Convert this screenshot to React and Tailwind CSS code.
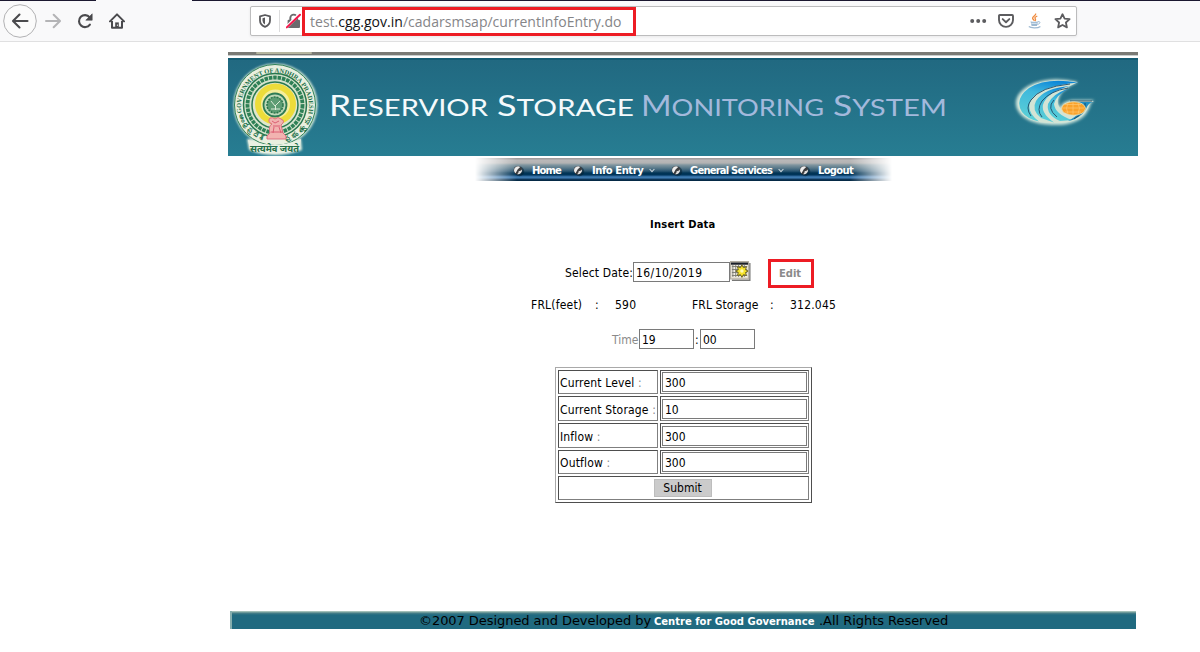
import React from 'react';

const TAHOMA = "font-['DejaVu_Sans_Condensed','DejaVu_Sans',sans-serif] [font-stretch:condensed]";

function BackIcon() {
  return (
    <svg width="34" height="34" viewBox="0 0 34 34" className="shrink-0">
      <circle cx="17" cy="17" r="16.3" fill="#fbfbfb" stroke="#b1b1b3" />
      <path d="M24.5 17H10.5M16.5 10.5L10 17L16.5 23.5" fill="none" stroke="#4a4a4d" strokeWidth="2.1" strokeLinecap="round" strokeLinejoin="round" />
    </svg>
  );
}

function ForwardIcon() {
  return (
    <svg width="16" height="16" viewBox="0 0 16 16" className="shrink-0">
      <path d="M1 8H14.5M8.7 1.8L15 8L8.7 14.2" fill="none" stroke="#b4b4b6" strokeWidth="2" strokeLinecap="round" strokeLinejoin="round" />
    </svg>
  );
}

function ReloadIcon() {
  return (
    <svg width="16" height="16" viewBox="0 0 16 16" className="shrink-0">
      <path d="M12.9 11.6A6 6 0 1 1 12.6 4.2" fill="none" stroke="#4a4a4d" strokeWidth="2.1" strokeLinecap="round" />
      <path d="M15.2 0.8V7.2H8.8Z" fill="#4a4a4d" stroke="#4a4a4d" strokeWidth="0.6" strokeLinejoin="round" />
    </svg>
  );
}

function HomeIcon() {
  return (
    <svg width="16" height="16" viewBox="0 0 16 16" className="shrink-0">
      <path d="M1 8.4L8 1.4L15 8.4" fill="none" stroke="#4a4a4d" strokeWidth="2" strokeLinecap="round" strokeLinejoin="round" />
      <path d="M3 8V14.8H13V8" fill="none" stroke="#4a4a4d" strokeWidth="2" strokeLinejoin="round" />
      <path d="M6.2 15V9.4H9.8V15" fill="#4a4a4d" />
      <path d="M8.4 11.6V12.8" stroke="#fff" strokeWidth="1" />
    </svg>
  );
}

function ShieldIcon() {
  return (
    <svg width="12" height="14" viewBox="0 0 12 14" className="shrink-0">
      <path d="M1 2.3L6 1L11 2.3V6.5Q11 11 6 12.9Q1 11 1 6.5Z" fill="none" stroke="#5a5a5d" strokeWidth="1.8" strokeLinejoin="round" />
      <path d="M6 3.6V10.4Q3.5 9.2 3.5 6.4V4.2Z" fill="#5a5a5d" />
    </svg>
  );
}

function InsecureIcon() {
  return (
    <svg width="15" height="16" viewBox="0 0 15 16" className="shrink-0">
      <path d="M4.3 8V5a3.4 3.4 0 0 1 6.8 0V8" fill="none" stroke="#6a6a6d" strokeWidth="1.9" />
      <rect x="1.6" y="6.8" width="12.4" height="8.2" rx="1" fill="#6a6a6d" />
      <path d="M0.6 13.9L13.4 1.1" stroke="#fff" strokeWidth="3" />
      <path d="M0.8 14.4L14 1.8" stroke="#f5174b" strokeWidth="2" strokeLinecap="round" />
    </svg>
  );
}

function PocketIcon() {
  return (
    <svg width="16" height="14" viewBox="0 0 16 14" className="shrink-0">
      <path d="M1.9 1H14.1Q15 1 15 1.9V6A7 6.9 0 0 1 1 6V1.9Q1 1 1.9 1Z" fill="none" stroke="#5c5c5f" strokeWidth="1.9" />
      <path d="M4.7 5.1L8 8.2L11.3 5.1" fill="none" stroke="#5c5c5f" strokeWidth="1.9" strokeLinecap="round" strokeLinejoin="round" />
    </svg>
  );
}

function JavaIcon() {
  return (
    <svg width="14" height="16" viewBox="0 0 14 16" className="shrink-0">
      <path d="M7.6 0.5C8.6 2.5 4.2 3.4 4.6 5.4C4.8 6.4 6 6.8 6.1 7.8M9.3 3C6.4 4.2 6.7 5 7.4 6C7.9 6.8 7.5 7.4 7 8" fill="none" stroke="#f08a3c" strokeWidth="1.3" />
      <path d="M2.5 8.2C4 9 8.5 9 10 8.2L9 13H3.6Z" fill="#9db9d2" />
      <path d="M10 8.7C12.8 8 12.6 11 9.4 11.4" fill="none" stroke="#9db9d2" strokeWidth="1" />
      <path d="M3.3 10.4H8.8" stroke="#e8f0f6" strokeWidth="0.8" />
      <path d="M0.8 13.6C3 15.4 10 15.3 12.4 13.4" fill="none" stroke="#9db9d2" strokeWidth="1.3" />
    </svg>
  );
}

function StarIcon() {
  return (
    <svg width="17" height="16" viewBox="0 0 17 16" className="shrink-0">
      <path d="M8.5 1.2L10.6 5.6L15.6 6.2L11.9 9.5L12.9 14.4L8.5 12L4.1 14.4L5.1 9.5L1.4 6.2L6.4 5.6Z" fill="none" stroke="#5c5c5f" strokeWidth="1.8" strokeLinejoin="round" />
    </svg>
  );
}

function BrowserBar() {
  return (
    <header className="bg-[#f9f9fa] border-b border-[#e0e0e1] h-[42px]">
      <div className="flex h-px">
        <div className="w-24 bg-[#1b1830]" />
        <div className="w-24 bg-[#f9f9fa]" />
        <div className="grow bg-[#1b1830]" />
      </div>
      <div className="flex h-10 items-center pl-[3px]">
        <BackIcon />
        <div className="flex items-center pl-2">
          <ForwardIcon />
        </div>
        <div className="pl-4">
          <ReloadIcon />
        </div>
        <div className="pl-4">
          <HomeIcon />
        </div>
        <div className="ml-[125px] flex h-[30px] w-[827px] items-center rounded-xs border border-[#bcbcbd] bg-white shadow-[0_1px_3px_rgba(0,0,0,0.07)]">
          <div className="flex items-center pl-2">
            <ShieldIcon />
            <div className="ml-2 h-[22px] w-px bg-[#dcdcdd]" />
            <div className="ml-[6px] w-[15px]">
              <InsecureIcon />
            </div>
          </div>
          <div className="ml-px flex h-[29px] w-[334px] shrink-0 items-center border-[3px] border-[#ed1c24] pl-[5px] font-['Open_Sans',sans-serif] text-[14px] tracking-[0.02px] whitespace-nowrap text-[#858588]">
            <span>
              test.<span className="text-[#111114]">cgg.gov.in</span>/cadarsmsap/currentInfoEntry.do
            </span>
          </div>
          <div className="ml-auto flex items-center pr-[5px]">
            <svg width="17" height="4" viewBox="0 0 17 4">
              <circle cx="2.2" cy="2" r="2" fill="#5c5c5f" />
              <circle cx="8.2" cy="2" r="2" fill="#5c5c5f" />
              <circle cx="14.2" cy="2" r="2" fill="#5c5c5f" />
            </svg>
            <div className="ml-[11px]"><PocketIcon /></div>
            <div className="ml-[14px]"><JavaIcon /></div>
            <div className="ml-[12px]"><StarIcon /></div>
          </div>
        </div>
      </div>
    </header>
  );
}

function Emblem() {
  return (
    <svg width="90" height="98" viewBox="0 0 90 98" className="shrink-0">
      <defs>
        <filter id="halo" x="-10%" y="-10%" width="120%" height="120%">
          <feGaussianBlur stdDeviation="1.3" />
        </filter>
        <path id="ringText" d="M12.6 53A34 34 0 1 1 79.4 53" />
        <path id="ringLeft" d="M10 55A38 38 0 0 0 36 81" />
        <path id="ringRight" d="M57 81A38 38 0 0 0 83 55" />
      </defs>
      <ellipse cx="46.5" cy="45" rx="42" ry="41.5" fill="#d8ecd9" filter="url(#halo)" />
      <path d="M18 79L20 90Q46 100 73 90L72 79Z" fill="#e4efe0" filter="url(#halo)" />
      <circle cx="46" cy="45" r="40.5" fill="#e9efdf" stroke="#2f8058" strokeWidth="1" />
      <circle cx="46" cy="45" r="31.5" fill="#d5e3cd" stroke="#27774e" strokeWidth="1.5" />
      <circle cx="46" cy="45" r="27.5" fill="none" stroke="#2e8056" strokeWidth="3.8" strokeDasharray="3.5 0.9" />
      <circle cx="46" cy="45" r="23" fill="#dfe6cc" stroke="#2a7950" strokeWidth="1.5" />
      <circle cx="46.5" cy="44" r="20.5" fill="#eddc3a" />
      <circle cx="46.5" cy="44" r="14.5" fill="#f4ee9c" />
      <circle cx="46" cy="45" r="11.5" fill="#bcd7b7" stroke="#2e7b55" strokeWidth="1.8" />
      <circle cx="46" cy="45" r="8" fill="#5d9c74" stroke="#287449" strokeWidth="1.5" strokeDasharray="2 1" />
      <path d="M42 41L46 46L51 41M42 49H51M46.5 45V50" stroke="#dcebd8" strokeWidth="1" fill="none" />
      <g fill="#226f49" fontFamily="Liberation Serif, serif" fontWeight="bold" fontSize="6.5">
        <text><textPath href="#ringText" textLength="120">GOVERNMENT OF ANDHRA PRADESH</textPath></text>
        <text fontFamily="Noto Sans, sans-serif"><textPath href="#ringLeft" textLength="36">ఆంధ్రప్రదేశ్</textPath></text>
        <text fontFamily="Noto Sans, sans-serif"><textPath href="#ringRight" textLength="36">ప్రభుత్వము</textPath></text>
      </g>
      <path d="M41 73Q39 66 43 64Q38 62 41 58Q44 57 46 59Q49 56 52 59Q57 61 52 65L54 73L57 76V79H38V76Z" fill="#f2b3b0" stroke="#d9677a" strokeWidth="0.9" />
      <path d="M43 61L46 63L50 61M44 66H51M42 72H54M45 67L44 73M50 67L52 73" stroke="#d8566d" strokeWidth="0.9" fill="none" />
      <path d="M19 80Q46 90 72 79L71 89Q46 97 21 90Z" fill="#e9f0e3" />
      <text x="21" y="92" fill="#266f48" fontFamily="Noto Sans, sans-serif" fontWeight="bold" fontSize="10" textLength="49" lengthAdjust="spacingAndGlyphs">सत्यमेव जयते</text>
    </svg>
  );
}

function BannerTitle() {
  const words = [
    { first: 'R', rest: 'ESERVIOR', x: 0, w: 159, fill: '#f4fafc' },
    { first: 'S', rest: 'TORAGE', x: 168, w: 137, fill: '#f4fafc' },
    { first: 'M', rest: 'ONITORING', x: 312, w: 183, fill: '#a3b9dc' },
    { first: 'S', rest: 'YSTEM', x: 504, w: 114, fill: '#a3b9dc' },
  ];
  return (
    <svg width="630" height="36" viewBox="0 0 630 36" className="shrink-0">
      {words.map((w) => (
        <text key={w.x} x={w.x} y="28" fill={w.fill} fontFamily="Lato, sans-serif" textLength={w.w} lengthAdjust="spacingAndGlyphs">
          <tspan fontSize="28.5">{w.first}</tspan>
          <tspan fontSize="23.5">{w.rest}</tspan>
        </text>
      ))}
    </svg>
  );
}

function SwirlLogo() {
  return (
    <svg width="90" height="56" viewBox="0 0 90 56" className="shrink-0">
      <defs>
        <filter id="glow" x="-10%" y="-10%" width="120%" height="120%">
          <feGaussianBlur stdDeviation="1.4" />
        </filter>
        <linearGradient id="wave" x1="0.6" y1="0" x2="0.3" y2="1">
          <stop offset="0" stopColor="#0c86d8" />
          <stop offset="0.35" stopColor="#3fb9dc" />
          <stop offset="1" stopColor="#5cd0d6" />
        </linearGradient>
      </defs>
      <path d="M70 8Q40 1 20 12Q4 22 9 35Q16 50 44 51Q68 52 78 40Q82 34 83 29L86 26H64Q52 28 53 34Q47 28 54 18L62 12Z" fill="#cfe6dc" filter="url(#glow)" />
      <path d="M70 8Q38 3 21 13Q7 24 11 35Q18 49 44 49Q68 50 77 39Q81 33 82 29L86 27H65Q54 29 54 36Q46 29 53 18L62 12Z" fill="#d3e4d5" />
      <path d="M70 8.5Q38 3 21 14Q6 25 14 38Q19 45 31 47.5Q17 37 23 26Q32 12 70 8.5Z" fill="url(#wave)" />
      <path d="M62 12Q36 14 28 27Q23 36 33 44L46 48.5Q31 38 36 28Q42 17 62 12Z" fill="url(#wave)" />
      <path d="M60 15Q44 20 40 30Q38 41 52 47L64 46Q47 40 46 30Q48 21 60 15Z" fill="url(#wave)" />
      <path d="M23 42Q17 34 23 26Q32 13 62 10M34 43Q28 36 34 27Q42 17 60 14M49 43Q38 34 46 26" fill="none" stroke="#234a64" strokeWidth="0.9" />
      <path d="M62 28H85Q80 29 78 35Q72 45 60 47Q75 39 74 31Z" fill="#1e8ec4" />
      <path d="M77 29Q79 37 66 45M62 27H84" fill="none" stroke="#20455e" strokeWidth="0.9" />
      <ellipse cx="65.5" cy="34.5" rx="12" ry="6.8" fill="#f9a22b" stroke="#e5e4c0" strokeWidth="0.8" />
      <path d="M54 34H76M57 30.5H73M57 38H73M65 28V41M60 29Q57 34 60 40M70 29Q73 34 70 40" fill="none" stroke="#ffc771" strokeWidth="0.7" />
    </svg>
  );
}

function Banner() {
  return (
    <div className="mt-[10px] ml-[228px] w-[910px]">
      <div className="flex h-[3px] bg-[#7a7a75]">
        <div className="ml-7 h-[2px] w-[56px] rounded-full bg-[#b5b59f]" />
      </div>
      <div className="h-[3px] border-t border-[#c9cecd] bg-white" />
      <div className="flex h-[98px] border-t-2 border-[#145c73] bg-linear-to-b from-[#216981] to-[#277d92]">
        <div className="pl-[1px]"><Emblem /></div>
        <div className="pt-[28px] pl-[10px]"><BannerTitle /></div>
        <div className="pt-[14px] pl-[49px]"><SwirlLogo /></div>
      </div>
    </div>
  );
}

function Bullet() {
  return (
    <svg width="13" height="13" viewBox="0 0 13 13" className="shrink-0">
      <circle cx="6.4" cy="7.4" r="4.8" fill="#06202f" opacity="0.5" />
      <circle cx="4.9" cy="6.2" r="4.2" fill="#3c3c3e" />
      <path d="M1 6.2A4 4 0 0 1 7.2 2.9L4.6 5.4L2.6 9.2A4 4 0 0 1 1 6.2Z" fill="#ededed" />
      <path d="M8.9 5.4A4 4 0 0 1 4.2 10.2Q6 8.4 5.6 7.2Q7.8 7 8.9 5.4Z" fill="#dedede" />
    </svg>
  );
}

function Caret() {
  return (
    <svg width="6" height="5" viewBox="0 0 6 5" className="shrink-0">
      <path d="M0.6 1L3 3.6L5.4 1" fill="none" stroke="#c8d3da" strokeWidth="1.1" />
    </svg>
  );
}

function NavItem({ label, width, tracking, caret }) {
  return (
    <div className={`flex items-center ${width}`}>
      <Bullet />
      <span className={`ml-[6px] whitespace-nowrap ${tracking}`}>{label}</span>
      {caret && <div className="ml-[6px] pt-px"><Caret /></div>}
    </div>
  );
}

function Nav() {
  return (
    <nav className="mt-[2px] ml-[475px] grid h-[23px] w-[417px]">
      <div className="col-start-1 row-start-1 bg-[linear-gradient(to_bottom,#a19c9d_0,#a19c9d_1px,#bab8b9_2px,#b3b3b3_5px,#7f959f_7px,#59798a_10px,#2d5874_13px,#003355_15px,#00355a_17px,#2a6296_18px,#3d7ab0_19px,#3d7ab0_20px,#153f66_21px,#042945_22px)] [mask-image:linear-gradient(to_right,transparent_0,black_42px,black_375px,transparent_417px)]" />
      <div className="z-10 col-start-1 row-start-1 flex items-center pt-px pl-[38px] font-['DejaVu_Sans',sans-serif] text-[10px] font-bold text-white">
        <NavItem label="Home" width="w-[60px]" tracking="tracking-[-0.9px]" />
        <NavItem label="Info Entry" width="w-[98px]" tracking="tracking-[-0.45px]" caret />
        <NavItem label="General Services" width="w-[128px]" tracking="tracking-[-0.8px]" caret />
        <NavItem label="Logout" width="w-[60px]" tracking="tracking-[-0.7px]" />
      </div>
    </nav>
  );
}

function CalendarIcon() {
  return (
    <svg width="21" height="20" viewBox="0 0 22 20" preserveAspectRatio="none" className="shrink-0">
      <path d="M2 19.3H20.8V2" fill="none" stroke="#4b4b48" strokeWidth="1.4" opacity="0.75" />
      <rect x="0.5" y="0.5" width="19" height="17.5" fill="#d9d2c4" stroke="#b3aea3" />
      <rect x="1.5" y="3.5" width="17" height="13" fill="#f3efe5" />
      <rect x="1" y="1.5" width="18" height="2.2" fill="#1a1f29" />
      <path d="M2 5.5H18M2 8.5H18M2 11.5H18M2 14.5H18M3 4V16M6 4V16M9 4V16M12 4V16M15 4V16" stroke="#77776f" strokeWidth="0.9" />
      <path d="M12.5 3.8L14 6.6L17.2 5.8L16.3 8.8L19 10L16.3 11.5L17.2 14.4L14 13.7L12.5 16.4L11 13.7L7.8 14.4L8.7 11.5L6 10L8.7 8.8L7.8 5.8L11 6.6Z" fill="#f6e32a" stroke="#62591a" strokeWidth="0.9" />
      <circle cx="12.5" cy="10" r="1.8" fill="#fffbb5" />
    </svg>
  );
}

function Field({ value, className }) {
  return (
    <input
      defaultValue={value}
      className={`h-5 shrink-0 border border-[#7a7a7a] bg-white p-0 pt-[2px] pl-[2px] outline-none ${className}`}
    />
  );
}

function EntryForm() {
  const rows = [
    { label: 'Current Level', value: '300', h: 'h-6' },
    { label: 'Current Storage', value: '10', h: 'h-[25px]' },
    { label: 'Inflow', value: '300', h: 'h-[25px]' },
    { label: 'Outflow', value: '300', h: 'h-6' },
  ];
  return (
    <form className={`${TAHOMA} text-[12px] leading-4 text-black`}>
      <h1 className="mt-[36px] ml-[650px] w-[80px] font-['DejaVu_Sans',sans-serif] text-[10px] font-bold tracking-[0.2px] [font-stretch:normal] whitespace-nowrap">Insert Data</h1>
      <div className="mt-[26px] flex h-[29px] pl-[565px]">
        <label className="w-[68px] pt-[6px] tracking-[0.15px] whitespace-nowrap">Select Date:</label>
        <div className="pt-[3px]"><Field value="16/10/2019" className="block w-[97px] tracking-[0.42px]" /></div>
        <div className="pt-[2px]"><CalendarIcon /></div>
        <a className="ml-[17px] flex h-[29px] w-[46px] items-center justify-center border-[3px] border-[#ed1c24] pr-[2px] font-['DejaVu_Sans',sans-serif] text-[10px] font-bold [font-stretch:normal] text-[#8a8a8a]">Edit</a>
      </div>
      <div className="mt-[9px] flex h-4 pl-[531px] tracking-[0.2px] whitespace-nowrap">
        <span className="w-[64px]">FRL(feet)</span>
        <span className="w-[20px]">:</span>
        <span className="w-[77px]">590</span>
        <span className="w-[78px] tracking-[0.1px]">FRL Storage</span>
        <span className="w-[20px]">:</span>
        <span>312.045</span>
      </div>
      <div className="mt-4 flex h-5 items-center pl-[612px]">
        <span className="w-[27px] pt-px text-[#8a8a8a]">Time</span>
        <Field value="19" className="w-[55px]" />
        <span className="w-[6px] pt-px pl-px">:</span>
        <Field value="00" className="w-[55px]" />
      </div>
      <div className="mt-[18px] ml-[555px] flex h-[136px] w-[257px] flex-col gap-[2px] border border-t-[#a9a9a9] border-r-[#4e4e4e] border-b-[#4e4e4e] border-l-[#a9a9a9] p-[2px]">
        {rows.map((r) => (
          <div key={r.label} className={`flex shrink-0 gap-[2px] ${r.h}`}>
            <div className="flex w-[100px] items-center border border-t-[#4e4e4e] border-r-[#7f7f7f] border-b-[#7f7f7f] border-l-[#4e4e4e] pt-[2px] pl-px tracking-[0.16px] whitespace-nowrap">
              <span>{r.label} <span className="text-[#8a8a8a]">:</span></span>
            </div>
            <div className="flex w-[149px] items-center border border-t-[#4e4e4e] border-r-[#7f7f7f] border-b-[#7f7f7f] border-l-[#4e4e4e] p-px">
              <Field value={r.value} className="w-[145px]" />
            </div>
          </div>
        ))}
        <div className="flex h-6 shrink-0 items-center justify-center border border-t-[#4e4e4e] border-r-[#7f7f7f] border-b-[#7f7f7f] border-l-[#4e4e4e] pr-[2px]">
          <button type="button" className="h-[18px] w-[58px] border border-[#bdbdbd] bg-[#cbcbcb] pt-px leading-[15px]">Submit</button>
        </div>
      </div>
    </form>
  );
}

function Footer() {
  return (
    <footer className="mt-[108px] ml-[230px] flex h-[18px] w-[906px] border-l-2 border-[#86aeae] bg-[linear-gradient(to_bottom,#b5cdc3_0,#8fb1ab_1px,#4a8088_2px,#206a80_4px)] pl-[187px] font-['DejaVu_Sans',sans-serif] text-[13px] leading-[20px] whitespace-nowrap text-black">
      <span className="w-[235px] tracking-[-0.06px]">©2007 Designed and Developed by</span>
      <span className="w-[165px] pt-px text-[10px] font-bold text-white">Centre for Good Governance</span>
      <span className="tracking-[-0.04px]">.All Rights Reserved</span>
    </footer>
  );
}

export default function App() {
  return (
    <div className="h-[652px] w-[1200px] overflow-hidden bg-white">
      <BrowserBar />
      <Banner />
      <Nav />
      <EntryForm />
      <Footer />
    </div>
  );
}
